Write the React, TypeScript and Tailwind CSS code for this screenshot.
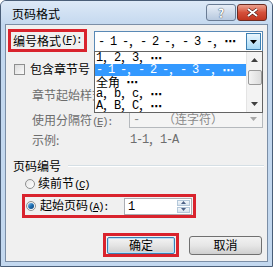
import React from 'react';

const listItems = ['1，2，3，⋯', '- 1 -，- 2 -，- 3 -，⋯', '全角 ⋯', 'a，b，c，⋯', 'A，B，C，⋯'];

// ascii in a half-width mono face, the rest in the CJK face (like SimSun)
function Sim({ text }: { text: string }) {
  const runs = text.match(/[\x00-\x7f]+|⋯|[^\x00-\x7f⋯]+/g) || [];
  return (
    <>
      {runs.map((r, i) =>
        r === '⋯' ? (
          <span key={i} className="font-['DejaVu_Sans',sans-serif] font-bold text-[11px] w-[12px] inline-block text-center">
            {r}
          </span>
        ) : r.charCodeAt(0) < 128 ? (
          <span key={i} className="font-['Liberation_Mono',monospace] text-[12px] tracking-[-1.2px] whitespace-pre">
            {r}
          </span>
        ) : (
          <span key={i} className="font-['Noto_Sans_CJK_SC',sans-serif] text-[12px] whitespace-pre">
            {r}
          </span>
        )
      )}
    </>
  );
}

function Key({ k }: { k: string }) {
  return (
    <span className="font-['Liberation_Mono',monospace] text-[11px] tracking-[-1.6px] shrink-0">
      (<span className="underline underline-offset-1">{k}</span>):
    </span>
  );
}

function Radio({ checked }: { checked?: boolean }) {
  return (
    <div className="w-[10px] h-[10px] rounded-full border border-[#8e8f8f] bg-gradient-to-br from-[#e6e6e6] to-[#ffffff] flex items-center justify-center shrink-0">
      {checked && <div className="w-[6px] h-[6px] rounded-full bg-gradient-to-br from-[#8ac9f2] via-[#1d6fb4] to-[#0d3f73]" />}
    </div>
  );
}

export default function App() {
  return (
    <div className="w-[276px] h-[267px] bg-white font-['Noto_Sans_CJK_SC',sans-serif] text-[12px] leading-none text-black whitespace-nowrap">
      <div className="w-[273px] h-[267px] flex flex-col rounded-t-[6px] border border-[#4a5e78] bg-[#c3d8ef] overflow-hidden">
        {/* title bar */}
        <div className="h-[23px] shrink-0 flex items-start pl-[11px] pr-[5px] bg-gradient-to-b from-[#dde9f7] to-[#c5d9ef]">
          <span className="mt-[7px] text-[12px]">页码格式</span>
          <div className="ml-auto mt-[3px] flex gap-[1px]">
            <div className="w-[30px] h-[17px] rounded-[3px] border border-[#6a7c94] bg-gradient-to-b from-[#e8eef7] to-[#b7c9df] flex items-center justify-center text-[12px] font-bold text-white [text-shadow:0_0_1px_#3b4a5e,0_0_1px_#3b4a5e]">
              ?
            </div>
            <div className="w-[30px] h-[17px] rounded-[3px] border border-[#6b2b21] bg-gradient-to-b from-[#eba08f] via-[#d5503a] to-[#c0361f] flex items-center justify-center">
              <svg width="11" height="9" viewBox="0 0 11 9">
                <path d="M1 1 L10 8 M10 1 L1 8" stroke="#3a1410" strokeWidth="3" />
                <path d="M1 1 L10 8 M10 1 L1 8" stroke="#ffffff" strokeWidth="2" />
              </svg>
            </div>
          </div>
        </div>

        {/* client area */}
        <div className="flex-1 mx-[4px] mb-[4px] border border-[#7b8ea6] bg-[#f0f0f0] relative flex flex-col">
          {/* row 1 */}
          <div className="flex items-start mt-[4px] ml-[2px]">
            <div className="w-[79px] h-[23px] shrink-0 border-[3px] border-[#d9232d] flex items-center pl-[2px]">
              <span>编号格式</span>
              <Key k="F" />
            </div>
            <div className="ml-[7px] mt-[2px] w-[169px] h-[21px] border border-[#5a89b5] bg-white flex items-center">
              <span className="pl-[3px] flex items-center">
                <Sim text="- 1 -，- 2 -，- 3 -，⋯" />
              </span>
              <div className="ml-auto mr-[1px] w-[15px] h-[17px] border border-[#3c7fb1] bg-gradient-to-b from-[#eaf6fd] to-[#a7d9f5] flex items-center justify-center">
                <svg width="7" height="4" viewBox="0 0 7 4">
                  <path d="M0 0 H7 L3.5 4 Z" fill="#000" />
                </svg>
              </div>
            </div>
          </div>

          {/* row 2 */}
          <div className="flex items-center h-[16px] mt-[9px] pl-[8px]">
            <div className="w-[11px] h-[11px] border border-[#8e8f8f] bg-gradient-to-br from-[#dcdcdc] to-[#fbfbfb]" />
            <span className="ml-[5px]">包含章节号</span>
          </div>

          {/* row 3 */}
          <div className="flex items-center h-[16px] mt-[10px] pl-[26px] text-[#6d6d6d]">
            <span>章节起始样式</span>
            <Key k="P" />
          </div>

          {/* row 4 */}
          <div className="flex items-center h-[19px] mt-[6px] pl-[26px] text-[#6d6d6d]">
            <span className="mt-[5px]">
              使用分隔符<Key k="E" />
            </span>
            <div className="ml-auto mr-[4px] w-[134px] h-[19px] border border-[#b5b9bd] bg-[#f4f4f4] flex items-center text-[#8a8a8a]">
              <span className="pl-[3px]"><Sim text="-" /></span>
              <span className="ml-[24px]">（连字符）</span>
              <div className="ml-auto mr-[1px] w-[15px] h-[15px] flex items-center justify-center">
                <svg width="7" height="4" viewBox="0 0 7 4">
                  <path d="M0 0 H7 L3.5 4 Z" fill="#a8a8a8" />
                </svg>
              </div>
            </div>
          </div>

          {/* row 5 */}
          <div className="flex items-center h-[16px] mt-[4px] pl-[26px] text-[#6d6d6d]">
            <span className="w-[98px]">示例:</span>
            <span className="flex items-center"><Sim text="1-1，1-A" /></span>
          </div>

          {/* row 6 */}
          <div className="flex items-center h-[16px] mt-[10px] pl-[7px] pr-[3px]">
            <span>页码编号</span>
            <div className="flex-1 ml-[7px] h-[2px] border-t border-[#d5dfe5] border-b-white border-b" />
          </div>

          {/* row 7 */}
          <div className="flex items-center h-[16px] mt-[2px] pl-[19px]">
            <Radio />
            <span className="ml-[3px]">
              续前节<span className="font-['Liberation_Mono',monospace] text-[11px] tracking-[-1.6px]">(<span className="underline underline-offset-1">C</span>)</span>
            </span>
          </div>

          {/* row 8 */}
          <div className="flex mt-[2px] ml-[16px]">
            <div className="w-[174px] h-[24px] border-[3px] border-[#d9232d] flex items-center pl-[1px]">
              <Radio checked />
              <span className="ml-[4px]">
                起始页码<Key k="A" />
              </span>
              <div className="ml-auto mr-[1px] w-[68px] h-[17px] border border-[#abadb3] bg-white flex items-center">
                <span className="pl-[3px]"><Sim text="1" /></span>
                <div className="ml-auto mr-[1px] w-[13px] h-[13px] flex flex-col gap-[1px]">
                  <div className="flex-1 border border-[#b4c8da] bg-gradient-to-b from-[#f2f6fa] to-[#d8e4ef] flex items-center justify-center">
                    <svg width="5" height="3" viewBox="0 0 5 3"><path d="M0 3 H5 L2.5 0 Z" fill="#4d6185" /></svg>
                  </div>
                  <div className="flex-1 border border-[#b4c8da] bg-gradient-to-b from-[#f2f6fa] to-[#d8e4ef] flex items-center justify-center">
                    <svg width="5" height="3" viewBox="0 0 5 3"><path d="M0 0 H5 L2.5 3 Z" fill="#4d6185" /></svg>
                  </div>
                </div>
              </div>
            </div>
          </div>

          {/* row 9 buttons */}
          <div className="flex items-center mt-[15px] ml-[97px]">
            <div className="w-[76px] h-[24px] border-[3px] border-[#d9232d] flex items-center justify-center">
              <div className="w-[68px] h-[17px] rounded-[2px] border border-[#3c7fb1] bg-gradient-to-b from-[#f4f4f4] via-[#e4e4e4] to-[#cfcfcf] flex items-center justify-center shadow-[inset_0_0_0_1px_#b8e1f8]">
                确定
              </div>
            </div>
            <div className="ml-[10px] w-[73px] h-[19px] rounded-[3px] border border-[#707070] bg-gradient-to-b from-[#f2f2f2] via-[#e6e6e6] to-[#cfcfcf] flex items-center justify-center">
              取消
            </div>
          </div>

          {/* dropped-down list */}
          <div className="absolute left-[88px] top-[26px] w-[169px] h-[62px] border border-[#646464] bg-white flex overflow-hidden">
            <div className="flex-1 flex flex-col">
              {listItems.map((t, i) => (
                <div
                  key={i}
                  className={`h-[12px] shrink-0 flex items-center pl-[1px] ${i === 1 ? 'bg-[#3399ff] text-white' : ''}`}
                >
                  <Sim text={t} />
                </div>
              ))}
            </div>
            <div className="w-[16px] bg-[#f3f3f3] border-l border-[#e4e4e4] flex flex-col items-center">
              <svg className="mt-[6px]" width="7" height="4" viewBox="0 0 7 4"><path d="M0 4 H7 L3.5 0 Z" fill="#404040" /></svg>
              <div className="mt-[8px] w-[14px] h-[15px] rounded-[2px] border border-[#9a9a9a] bg-gradient-to-r from-[#f3f3f3] to-[#dcdcdc]" />
              <svg className="mt-auto mb-[6px]" width="7" height="4" viewBox="0 0 7 4"><path d="M0 0 H7 L3.5 4 Z" fill="#404040" /></svg>
            </div>
          </div>
        </div>
      </div>
    </div>
  );
}
